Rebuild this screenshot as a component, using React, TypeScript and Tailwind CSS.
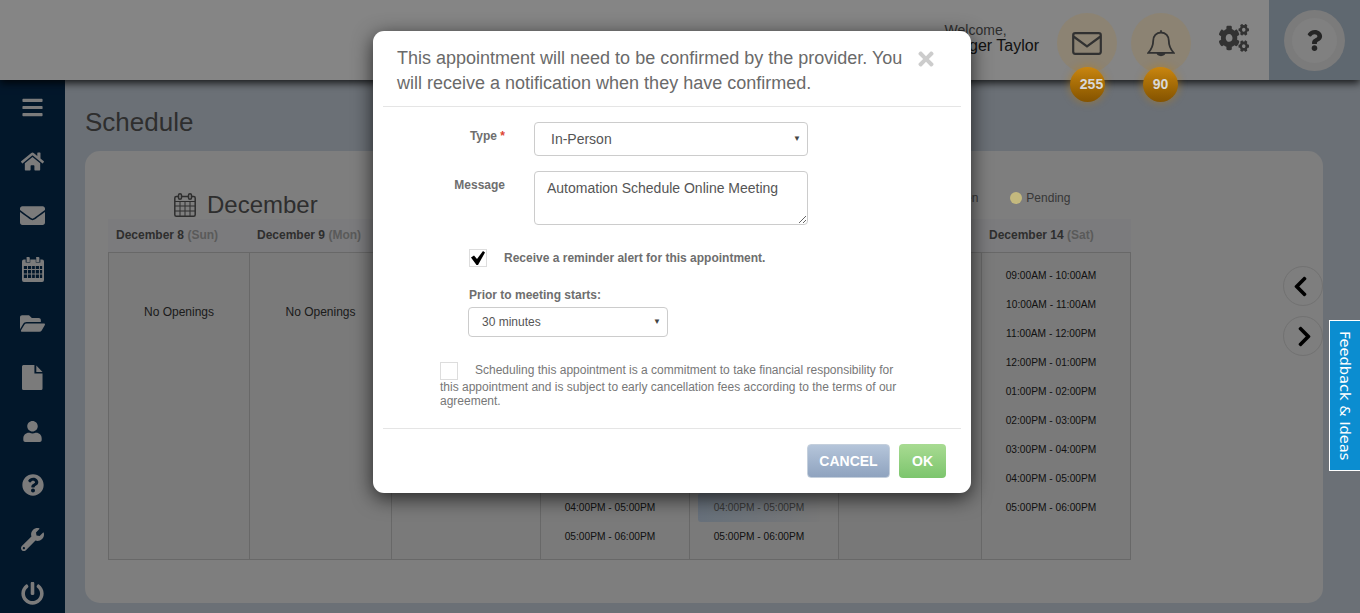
import type { ReactNode } from "react";
import { FaBars, FaHome, FaEnvelope, FaFolderOpen, FaUser, FaQuestionCircle, FaWrench, FaPowerOff, FaCogs, FaQuestion, FaChevronLeft, FaChevronRight, FaTimes } from "react-icons/fa";

const font = { fontFamily: '"Liberation Sans", Arial, sans-serif' };
const satTimes = ["09:00AM - 10:00AM", "10:00AM - 11:00AM", "11:00AM - 12:00PM", "12:00PM - 01:00PM", "01:00PM - 02:00PM", "02:00PM - 03:00PM", "03:00PM - 04:00PM", "04:00PM - 05:00PM", "05:00PM - 06:00PM"];
const lateTimes = ["04:00PM - 05:00PM", "05:00PM - 06:00PM"];

function SolidCalendar() {
  return (
    <svg width="22" height="25" viewBox="0 0 24 25" preserveAspectRatio="none" fill="currentColor">
      <path fillRule="evenodd" d="M5 0h2.500a1 1 0 0 1 1 1v4H5V1zM15.500 0H18a1 1 0 0 1 1 1v4h-3.500V1a1 1 0 0 1 0-1zM2 2.500h2v3h5v-3h6v3h5v-3h2a2 2 0 0 1 2 2V23a2 2 0 0 1-2 2H2a2 2 0 0 1-2-2V4.500a2 2 0 0 1 2-2zM2 9v3h3.500V9zm4.500 0v3H10V9zM11 9v3h3V9zm4 0v3h3.500V9zm4.500 0v3H22V9zM2 13v3.500h3.500V13zm4.500 0v3.500H10V13zM11 13v3.500h3V13zm4 0v3.500h3.500V13zm4.500 0v3.500H22V13zM2 17.500V21h3.500v-3.500zm4.500 0V21H10v-3.500zm4.500 0V21h3v-3.500zm4 0V21h3.500v-3.500zm4.500 0V21H22v-3.500z" />
    </svg>
  );
}

function OutlineCalendar() {
  return (
    <svg width="22" height="24" viewBox="0 0 22 24" fill="none" stroke="currentColor" strokeWidth="1.500">
      <rect x="0.800" y="3.500" width="20.400" height="19.700" rx="1.500" />
      <path d="M1 8.500h20M1 13h20M1 18h20M6 8.500V23M11 8.500V23M16 8.500V23" strokeWidth="1" />
      <rect x="4.500" y="0.800" width="3" height="5.500" rx="1.500" fill="#e5e5e5" />
      <rect x="14.500" y="0.800" width="3" height="5.500" rx="1.500" fill="#e5e5e5" />
    </svg>
  );
}

function FileIcon() {
  return (
    <svg width="21" height="25" viewBox="0 0 22 25" preserveAspectRatio="none" fill="currentColor">
      <path d="M1.500 0H13v8.500h8.500v15A1.500 1.500 0 0 1 20 25H1.500A1.500 1.500 0 0 1 0 23.500v-22A1.500 1.500 0 0 1 1.500 0zM15 0.500l6.500 6.500H15z" />
    </svg>
  );
}

function Mail() {
  return (
    <svg width="30" height="23" viewBox="0 0 30 23" fill="none" stroke="#5a5a5a" strokeWidth="2.200">
      <rect x="1.200" y="1.200" width="27.600" height="20.600" rx="2" />
      <path d="M1.500 4.500 15 14.500 28.500 4.500" />
    </svg>
  );
}

function Bell() {
  return (
    <svg width="28" height="29" viewBox="0 0 28 29" fill="none" stroke="#5a5a5a" strokeWidth="1.800">
      <path d="M14 1.200v2.300M14 3.500c-4.800 0-7.800 3.600-7.800 8.200 0 5.500-1.700 8.500-4.900 12.100h25.400c-3.200-3.600-4.900-6.600-4.900-12.100 0-4.600-3-8.200-7.800-8.200z" />
      <path d="M10.500 24.200c.5 2.700 6.500 2.700 7 0z" fill="#5a5a5a" />
    </svg>
  );
}

function Badge({ n, cls }: { n: string; cls: string }) {
  return (
    <div className={`absolute z-30 top-[67px] flex h-[35px] w-[35px] items-center justify-center rounded-full bg-gradient-to-b from-[#c98610] to-[#845300] text-[14px] font-bold text-[#d8d8d8] shadow-[0_0_7px_2px_rgba(190,125,15,0.35)] ${cls}`}>
      {n}
    </div>
  );
}

function Column({ last = false, children, cls = "" }: { last?: boolean; children?: ReactNode; cls?: string }) {
  return <div className={`h-full ${last ? "" : "border-r border-[#bdbdbd]"} ${cls}`}>{children}</div>;
}

function Slots({ items, offset, highlight }: { items: string[]; offset: string; highlight?: string }) {
  return (
    <div className={`flex w-[138px] flex-col px-[8px] ${offset}`}>
      {items.map((t) => (
        <div key={t} className={`flex h-[29px] items-center justify-center rounded-[3px] text-[10.200px] ${highlight === t ? "bg-gradient-to-r from-[#bccde0] to-[#dcdcdc] text-[#666]" : "text-[#222]"}`}>
          {t}
        </div>
      ))}
    </div>
  );
}

function NativeLikeSelect({ value, cls, arrow }: { value: string; cls: string; arrow: string }) {
  return (
    <div className={`relative ${arrow}`}>
      <select className={`block appearance-none rounded-[4px] border border-[#ccc] bg-white text-[#555] ${cls}`} style={font}>
        <option>{value}</option>
      </select>
      <span className="pointer-events-none absolute right-[7px] top-1/2 -translate-y-1/2 text-[8px] leading-none text-[#444]">▼</span>
    </div>
  );
}

const headers = [["December 8", "(Sun)"], ["December 9", "(Mon)"], ["December 10", "(Tue)"], ["December 11", "(Wed)"], ["December 12", "(Thu)"], ["December 13", "(Fri)"], ["December 14", "(Sat)"]];
const grid = "grid grid-cols-[141px_142px_149px_149px_149px_143px_148px]";

export default function App() {
  const sideIcons = [
    <FaBars size={23} />, <FaHome size={23} />, <FaEnvelope size={25} />, <SolidCalendar />, <FaFolderOpen size={25} />, <FileIcon />, <FaUser size={21} />, <FaQuestionCircle size={22} />, <FaWrench size={23} />, <FaPowerOff size={23} />,
  ];
  return (
    <div style={font} className="relative flex h-[613px] w-[1360px] flex-col overflow-hidden bg-[#c4cdd8]">
      {/* Header */}
      <header className="relative flex h-[80px] shrink-0 items-stretch justify-end bg-[#f2f2f2] shadow-[0_3px_8px_rgba(0,0,0,0.8)]">
        <div className="mr-[18px] mt-[22px] flex flex-col leading-none">
          <span className="-ml-[4px] text-[14px] leading-[16px] text-[#555]">Welcome,</span>
          <span className="text-[16px] leading-[16px] text-[#222]">Roger Taylor</span>
        </div>
        <div className="mr-[14px] mt-[13px] flex h-[60px] w-[60px] items-center justify-center rounded-full bg-[#ffefd1]"><Mail /></div>
        <div className="mr-[27px] mt-[13px] flex h-[60px] w-[60px] items-center justify-center rounded-full bg-[#ffefd1]"><Bell /></div>
        <div className="mr-[20px] flex w-[31px] items-center justify-center pb-[4px] text-[#5c5c5c]"><FaCogs preserveAspectRatio="none" className="h-[28px] w-[30px]" /></div>
        <div className="flex w-[91px] items-center justify-center bg-[#adbdcc]">
          <div className="flex h-[61px] w-[61px] items-center justify-center rounded-full bg-[#e0e0e0]">
            <div className="flex h-[45px] w-[45px] items-center justify-center rounded-full bg-[#e9e9e9] text-[#444]"><FaQuestion size={21} /></div>
          </div>
        </div>
      </header>
      <Badge n="255" cls="left-[1070px] pl-[8px]" />
      <Badge n="90" cls="left-[1143px]" />

      <div className="flex min-h-0 flex-1">
        {/* Sidebar */}
        <nav className="w-[65px] shrink-0 bg-[#052a4e] text-[#e0e0e0]">
          {sideIcons.map((ic, i) => (
            <div key={i} className="flex h-[54px] items-center justify-center">{ic}</div>
          ))}
        </nav>

        {/* Content */}
        <main className="min-w-0 flex-1 pl-[20px] pr-[37px] pt-[26px]">
          <h1 className="h-[45px] text-[26px] leading-[32px] text-[#555]">Schedule</h1>
          <section className="relative h-[452px] rounded-[15px] bg-[#e5e5e5] pl-[23px] pt-[37px]">
            <div className="flex h-[31px] items-center gap-[11px] pl-[66px] pt-[3px] text-[#555]">
              <OutlineCalendar />
              <span className="text-[24px] leading-[28px]">December</span>
            </div>
            <div className="absolute left-[864px] top-[39px] flex h-[16px] items-center text-[12px] text-[#666]">
              <span className="mr-[32px]">Open</span>
              <span className="relative z-30 mr-[4px] h-[12px] w-[12px] rounded-full bg-[#c4b97e]" />
              Pending
            </div>
            <div className="w-[1023px]">
              <div className={`${grid} h-[33px] items-center bg-[#e0e1e3] pb-[2px] pl-[1px] text-[12px] font-bold text-[#555]`}>
                {headers.map(([d, w]) => (
                  <div key={d} className="pl-[7px]">{d} <span className="text-[#a5a5a5]">{w}</span></div>
                ))}
              </div>
              <div className={`${grid} h-[308px] border border-[#bdbdbd] bg-[#dedede]`}>
                <Column><div className="pt-[50px] text-center text-[12px] text-[#333]">No Openings</div></Column>
                <Column><div className="pt-[50px] text-center text-[12px] text-[#333]">No Openings</div></Column>
                <Column />
                <Column><Slots items={lateTimes} offset="pt-[240px]" /></Column>
                <Column><Slots items={lateTimes} offset="pt-[240px]" highlight="04:00PM - 05:00PM" /></Column>
                <Column cls="bg-[#dadada]" />
                <Column last><Slots items={satTimes} offset="pt-[8px]" /></Column>
              </div>
            </div>
            <div className="absolute left-[1198px] top-[115px] flex flex-col gap-[10px]">
              <button className="flex h-[40px] w-[40px] items-center justify-center rounded-full border border-[#cfcfcf] pr-[5px] text-black"><FaChevronLeft size={23} /></button>
              <button className="flex h-[40px] w-[40px] items-center justify-center rounded-full border border-[#cfcfcf] pl-[2px] text-black"><FaChevronRight size={23} /></button>
            </div>
          </section>
        </main>
      </div>

      {/* Overlay */}
      <div className="absolute inset-0 z-20 bg-black/45" />

      {/* Feedback tab */}
      <div className="absolute right-0 top-[320px] z-30 flex h-[151px] w-[31px] items-center justify-center border border-r-0 border-white bg-[#0b8dd0] text-[14.600px] text-white [writing-mode:vertical-rl]" style={{ fontFamily: '"DejaVu Sans", sans-serif' }}>
        Feedback &amp; Ideas
      </div>

      {/* Modal */}
      <div className="absolute left-[373px] top-[31px] z-40 h-[462px] w-[598px] rounded-[11px] bg-white px-[10px] shadow-[0_5px_20px_rgba(0,0,0,0.7)]">
        <div className="relative h-[76px] border-b border-[#e5e5e5] pl-[14px] pr-[55px] pt-[15px] text-[18px] leading-[25px] text-[#6a6a6a]">
          This appointment will need to be confirmed by the provider. You will receive a notification when they have confirmed.
          <span className="absolute right-[24px] top-[17px] text-[#ccc]"><FaTimes size={22} /></span>
        </div>

        <div className="flex pt-[15px]">
          <div className="w-[122px] pt-[5px] text-right text-[12px] font-bold text-[#6e6e6e]">Type <span className="text-[#d43]">*</span></div>
          <NativeLikeSelect value="In-Person" arrow="ml-[29px]" cls="h-[34px] w-[274px] pl-[16px] text-[14px]" />
        </div>
        <div className="flex pt-[15px]">
          <div className="w-[122px] pt-[5px] text-right text-[12px] font-bold text-[#6e6e6e]">Message</div>
          <textarea defaultValue="Automation Schedule Online Meeting" className="ml-[29px] h-[54px] w-[274px] rounded-[4px] border border-[#ccc] px-[12px] py-[6px] text-[14px] leading-[20px] text-[#555]" />
        </div>

        <div className="flex items-center pl-[86px] pt-[24px]">
          <span className="flex h-[18px] w-[18px] items-center justify-center border border-[#ddd] text-black">
            <svg width="14" height="14" viewBox="0 0 14 14" fill="currentColor"><path d="M0 6.500 3 4.500l3 3.500L12 0l2 1.500L7 14H5.500z" /></svg>
          </span>
          <span className="pl-[17px] text-[12px] font-bold leading-[14px] text-[#6e6e6e]">Receive a reminder alert for this appointment.</span>
        </div>
        <div className="pl-[86px] pt-[21px] text-[12px] font-bold leading-[14px] text-[#6e6e6e]">Prior to meeting starts:</div>
        <div className="pl-[85px] pt-[5px]">
          <NativeLikeSelect value="30 minutes" arrow="w-[200px]" cls="h-[30px] w-[200px] pl-[13px] text-[12px]" />
        </div>

        <div className="h-[66px] pl-[57px] pr-[60px] pt-[25px] text-[12px] leading-[14px] text-[#777]">
          <span className="mr-[17px] inline-block h-[18px] w-[18px] border border-[#ddd] align-middle" />
          Scheduling this appointment is a commitment to take financial responsibility for this appointment and is subject to early cancellation fees according to the terms of our agreement.
        </div>

        <div className="mt-[25px] flex justify-end gap-[9px] border-t border-[#e5e5e5] pr-[15px] pt-[15px]">
          <button className="h-[34px] w-[83px] rounded-[4px] border border-[#c4cfdc] bg-gradient-to-b from-[#b5c5da] to-[#8fa3bf] text-[14px] font-bold text-white">CANCEL</button>
          <button className="h-[34px] w-[47px] rounded-[4px] bg-gradient-to-b from-[#a8db92] to-[#7cc56d] text-[14px] font-bold text-white">OK</button>
        </div>
      </div>
    </div>
  );
}
